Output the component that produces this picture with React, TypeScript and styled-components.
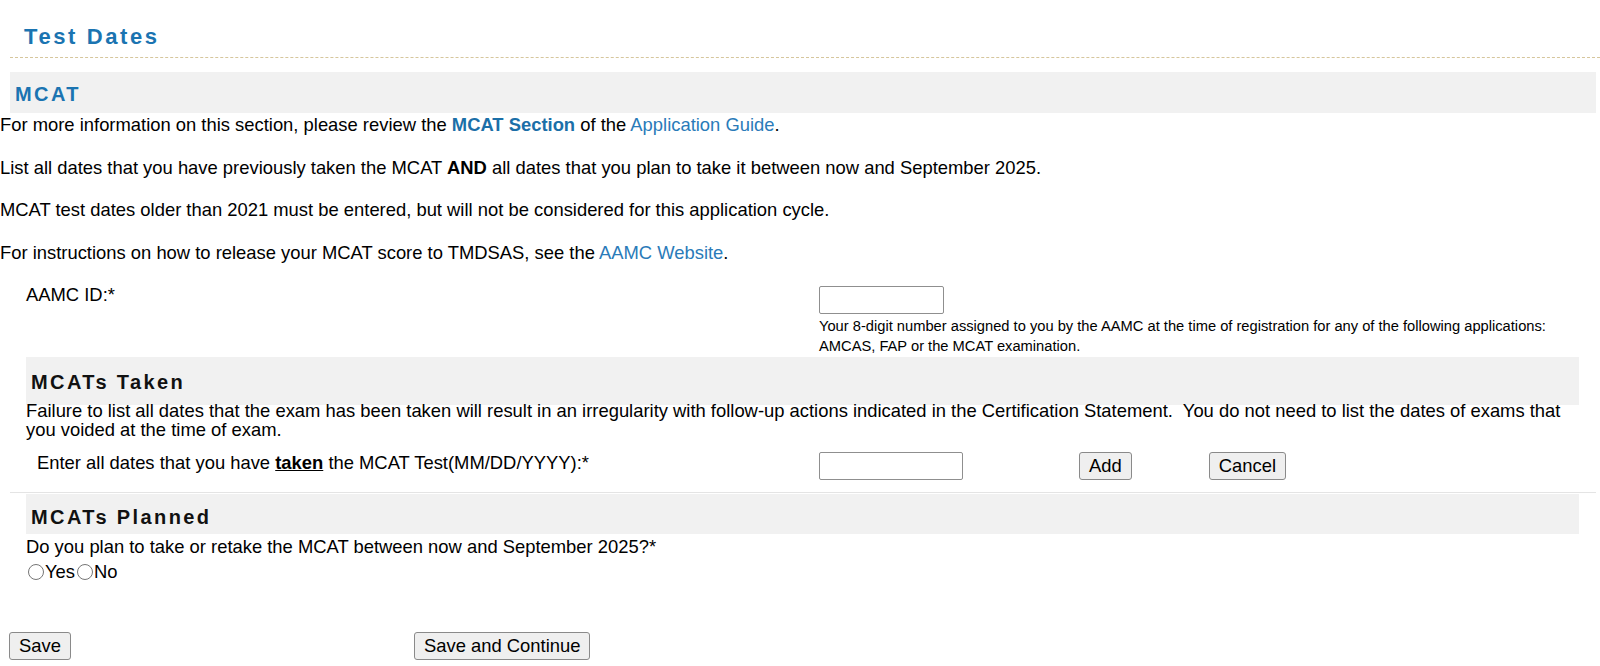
import React, { useState } from "react";
import styled, { createGlobalStyle } from "styled-components";

const GlobalStyle = createGlobalStyle`
  html, body {
    margin: 0;
    padding: 0;
    background: #ffffff;
  }
  body {
    font-family: "Liberation Sans", Arial, sans-serif;
    font-size: 18.4px;
    color: #000000;
  }
`;

const App = () => {
  const [aamcId, setAamcId] = useState("");
  const [takenDate, setTakenDate] = useState("");
  const [planned, setPlanned] = useState<"" | "yes" | "no">("");

  return (
    <Page>
      <GlobalStyle />
      <TitleWrap>
        <PageTitle>Test Dates</PageTitle>
      </TitleWrap>

      <SectionBar>
        <SectionTitle>MCAT</SectionTitle>
      </SectionBar>

      <Para>
        For more information on this section, please review the <StrongLink href="#">MCAT Section</StrongLink> of the{" "}
        <Link href="#">Application Guide</Link>.
      </Para>
      <Para>
        List all dates that you have previously taken the MCAT <b>AND</b> all dates that you plan to take it between now and
        September 2025.
      </Para>
      <Para>MCAT test dates older than 2021 must be entered, but will not be considered for this application cycle.</Para>
      <Para>
        For instructions on how to release your MCAT score to TMDSAS, see the <Link href="#">AAMC Website</Link>.
      </Para>

      <FieldRow indent={26} labelWidth={793}>
        <FieldLabel>AAMC ID:*</FieldLabel>
        <FieldControl>
          <TextInput width={125} value={aamcId} onChange={e => setAamcId(e.target.value)} />
          <HelpText>
            Your 8-digit number assigned to you by the AAMC at the time of registration for any of the following applications:
            <br />
            AMCAS, FAP or the MCAT examination.
          </HelpText>
        </FieldControl>
      </FieldRow>

      <SubSection>
        <SubBar barHeight={48} offset={2}>
          <SubTitle>MCATs Taken</SubTitle>
        </SubBar>
        <SubText>
          Failure to list all dates that the exam has been taken will result in an irregularity with follow-up actions indicated
          in the Certification Statement.&nbsp; You do not need to list the dates of exams that you voided at the time of exam.
        </SubText>
        <FieldRow indent={11} labelWidth={782}>
          <FieldLabel>
            Enter all dates that you have <u><b>taken</b></u> the MCAT Test(MM/DD/YYYY):*
          </FieldLabel>
          <ControlRow>
            <TextInput width={144} value={takenDate} onChange={e => setTakenDate(e.target.value)} />
            <AddButton type="button">Add</AddButton>
            <CancelButton type="button">Cancel</CancelButton>
          </ControlRow>
        </FieldRow>
      </SubSection>

      <Divider />

      <SubSection>
        <SubBar barHeight={40} offset={7}>
          <SubTitle>MCATs Planned</SubTitle>
        </SubBar>
        <Question>Do you plan to take or retake the MCAT between now and September 2025?*</Question>
        <RadioGroup>
          <RadioLabel>
            <Radio type="radio" name="planned" checked={planned === "yes"} onChange={() => setPlanned("yes")} />
            Yes
          </RadioLabel>
          <RadioLabel>
            <Radio type="radio" name="planned" checked={planned === "no"} onChange={() => setPlanned("no")} />
            No
          </RadioLabel>
        </RadioGroup>
      </SubSection>

      <Actions>
        <FormButton type="button">Save</FormButton>
        <FormButton type="button">Save and Continue</FormButton>
      </Actions>
    </Page>
  );
};

export default App;

const Page = styled.div`
  width: 1600px;
  padding-top: 24px;
`;
const TitleWrap = styled.div`
  margin-left: 10px;
  padding: 0 0 7px 14px;
  border-bottom: 1px dashed #d6c69c;
`;
const PageTitle = styled.h1`
  margin: 0;
  font-size: 22px;
  line-height: 26px;
  font-weight: bold;
  letter-spacing: 2.6px;
  color: #1b74b1;
`;
const SectionBar = styled.div`
  margin: 14px 4px 0 10px;
  height: 41px;
  display: flex;
  align-items: center;
  padding: 0 5px;
  background-color: #f1f1f1;
`;
const SectionTitle = styled.h2`
  margin: 4px 0 0;
  font-size: 20px;
  font-weight: bold;
  letter-spacing: 2.4px;
  color: #1b74b1;
`;
const Para = styled.p`
  margin: 0 0 19.6px;
  line-height: 23px;
`;
const Link = styled.a`
  color: #2a7bb9;
  text-decoration: none;
`;
const StrongLink = styled(Link)`
  font-weight: bold;
  color: #1b6fa8;
`;
const FieldRow = styled.div<{ indent: number; labelWidth: number }>`
  display: grid;
  grid-template-columns: ${p => p.labelWidth}px 1fr;
  padding-left: ${p => p.indent}px;
  align-items: start;
`;
const FieldLabel = styled.div`
  line-height: 23px;
`;
const FieldControl = styled.div`
  display: flex;
  flex-direction: column;
  align-items: flex-start;
  padding-top: 3px;
`;
const TextInput = styled.input<{ width: number }>`
  box-sizing: border-box;
  width: ${p => p.width}px;
  height: 28px;
  margin: 0;
  border: 1px solid #8f8f8f;
  border-radius: 2px;
  font: 16px "Liberation Sans", Arial, sans-serif;
  padding: 2px 4px;
`;
const HelpText = styled.div`
  margin-top: 2px;
  font-size: 14.7px;
  line-height: 20px;
`;
const SubSection = styled.div`
  margin: 0 21px 0 26px;
`;
const SubBar = styled.div<{ barHeight: number; offset: number }>`
  margin-top: 1px;
  height: ${p => p.barHeight}px;
  box-sizing: border-box;
  display: flex;
  align-items: center;
  padding: ${p => p.offset}px 5px 0;
  background-color: #f1f1f1;
`;
const SubTitle = styled.h3`
  margin: 0;
  font-size: 20px;
  font-weight: bold;
  letter-spacing: 2.4px;
  color: #111111;
`;
const SubText = styled.p`
  margin: -4px 0 12px;
  line-height: 19px;
`;
const ControlRow = styled.div`
  display: flex;
  align-items: center;
  padding-top: 1px;
`;
const FormButton = styled.button`
  height: 28px;
  padding: 0 9px;
  font: 18.4px "Liberation Sans", Arial, sans-serif;
  line-height: 26px;
  color: #000000;
  background-color: #efefef;
  border: 1px solid #8a8a8a;
  border-radius: 3px;
`;
const AddButton = styled(FormButton)`
  margin-left: 116px;
`;
const CancelButton = styled(FormButton)`
  margin-left: 77px;
`;
const Divider = styled.hr`
  margin: 12px 4px 0 10px;
  border: none;
  border-top: 1px solid #e4e4e4;
  height: 0;
`;
const Question = styled.div`
  margin-top: 2px;
  line-height: 22px;
`;
const RadioGroup = styled.div`
  display: flex;
  line-height: 27px;
`;
const RadioLabel = styled.label`
  display: inline-flex;
  align-items: center;
`;
const Radio = styled.input`
  margin: 0 1px 0 2px;
  width: 16px;
  height: 16px;
`;
const Actions = styled.div`
  display: grid;
  grid-template-columns: 405px auto;
  justify-items: start;
  padding: 47px 0 0 9px;
`;
